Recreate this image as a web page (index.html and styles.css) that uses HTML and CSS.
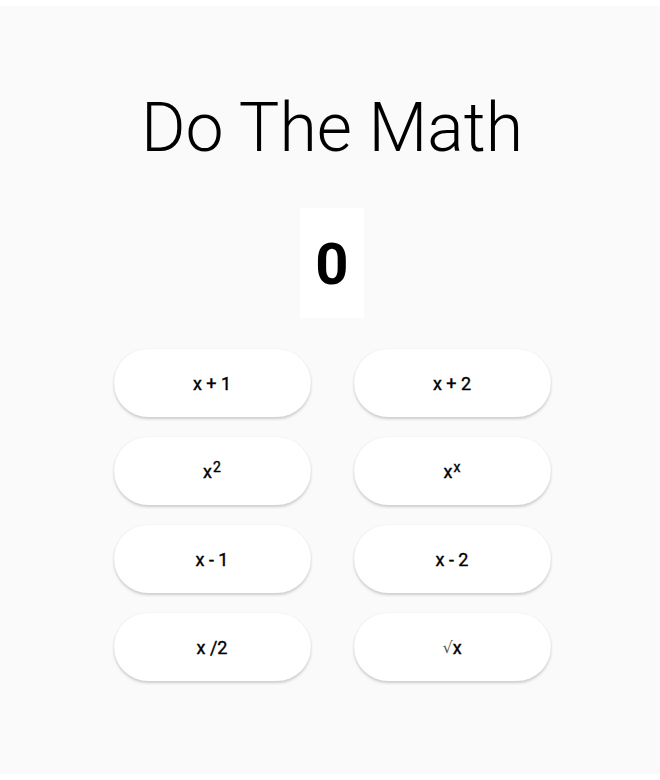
FILE: index.html
```html
<!DOCTYPE html>
<html>
<head>
<meta charset="utf-8">
<link rel="stylesheet" href="styles.css">
</head>
<body>
<main class="app">
  <h1 class="title">Do The Math</h1>
  <div class="result">0</div>
  <div class="ops">
    <button class="op">x + 1</button>
    <button class="op">x + 2</button>
    <button class="op">x<sup>2</sup></button>
    <button class="op">x<sup>x</sup></button>
    <button class="op">x - 1</button>
    <button class="op">x - 2</button>
    <button class="op">x /2</button>
    <button class="op"><span class="root">√</span>x</button>
  </div>
</main>
</body>
</html>
```

FILE: styles.css
```css
html, body {
  margin: 0;
  padding: 0;
  background: #ffffff;
}

.app {
  margin-top: 6px;
  height: 768px;
  background: #fafafa;
  box-sizing: border-box;
  padding: 82px 0 0 4px;
  display: flex;
  flex-direction: column;
  align-items: center;
  font-family: Roboto, "Liberation Sans", sans-serif;
  color: #000;
}

.title {
  margin: 0;
  font-size: 68px;
  font-weight: 300;
  line-height: 80px;
  letter-spacing: 0;
}

.result {
  margin-top: 40px;
  background: #ffffff;
  height: 110px;
  line-height: 112px;
  padding: 0 15px;
  font-size: 58px;
  font-weight: 700;
}

.ops {
  margin-top: 31px;
  display: grid;
  grid-template-columns: 197px 197px;
  grid-auto-rows: 68px;
  column-gap: 43px;
  row-gap: 20px;
}

.op {
  border: none;
  background: #ffffff;
  border-radius: 34px;
  box-shadow: 0 2px 3px rgba(0, 0, 0, 0.18), 0 0 2px rgba(0, 0, 0, 0.06);
  font-family: Roboto, "Liberation Sans", sans-serif;
  font-size: 18px;
  font-weight: 400;
  -webkit-text-stroke: 0.4px #000;
  color: #000;
  display: flex;
  align-items: center;
  justify-content: center;
  padding: 0;
}

.op sup {
  font-size: 14px;
  line-height: 0;
  position: relative;
  top: -4px;
  margin-left: 1px;
}

.root {
  font-family: "DejaVu Serif", serif;
  font-weight: 300;
  font-size: 16px;
  color: #555;
  -webkit-text-stroke: 0;
}
```
